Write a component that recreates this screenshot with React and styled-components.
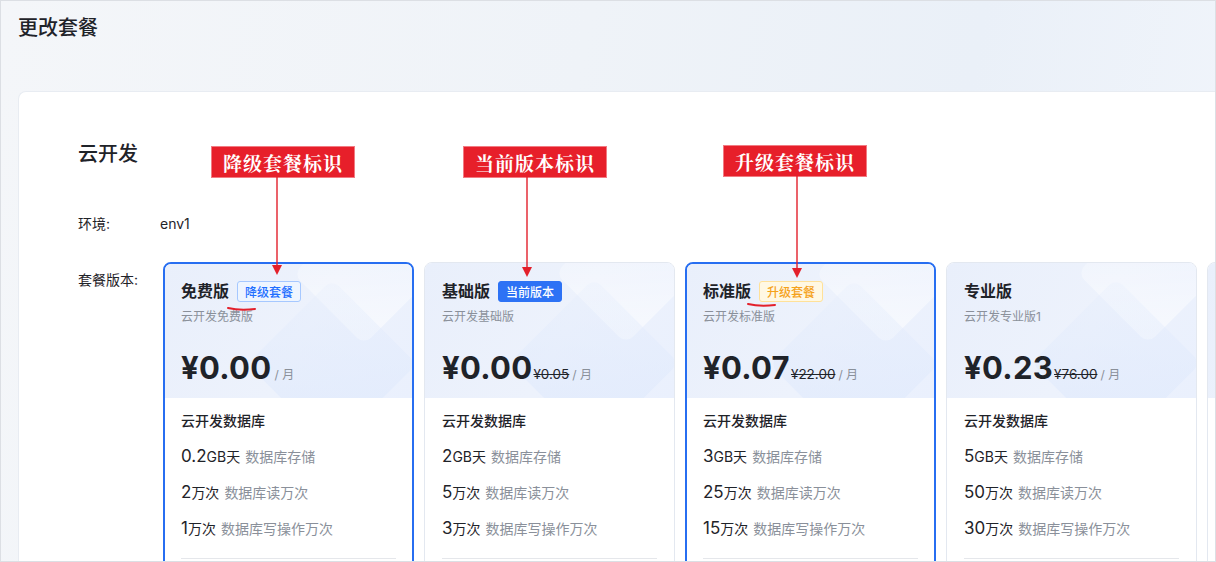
import React from 'react';
import styled, { createGlobalStyle, css } from 'styled-components';

const GlobalStyle = createGlobalStyle`
  html, body {
    margin: 0;
    padding: 0;
    background: #fff;
  }
  * {
    box-sizing: border-box;
  }
`;

const plans = [
  {
    name: '免费版',
    tag: 'down',
    desc: '云开发免费版',
    price: '¥0.00',
    selected: true,
    items: [
      ['0.2', 'GB天', '数据库存储'],
      ['2', '万次', '数据库读万次'],
      ['1', '万次', '数据库写操作万次'],
    ],
  },
  {
    name: '基础版',
    tag: 'current',
    desc: '云开发基础版',
    price: '¥0.00',
    original: '¥0.05',
    items: [
      ['2', 'GB天', '数据库存储'],
      ['5', '万次', '数据库读万次'],
      ['3', '万次', '数据库写操作万次'],
    ],
  },
  {
    name: '标准版',
    tag: 'up',
    desc: '云开发标准版',
    price: '¥0.07',
    original: '¥22.00',
    selected: true,
    items: [
      ['3', 'GB天', '数据库存储'],
      ['25', '万次', '数据库读万次'],
      ['15', '万次', '数据库写操作万次'],
    ],
  },
  {
    name: '专业版',
    desc: '云开发专业版1',
    price: '¥0.23',
    original: '¥76.00',
    items: [
      ['5', 'GB天', '数据库存储'],
      ['50', '万次', '数据库读万次'],
      ['30', '万次', '数据库写操作万次'],
    ],
  },
];

const tagText = { down: '降级套餐', current: '当前版本', up: '升级套餐' };

const notes = [
  { text: '降级套餐标识', left: 210, top: 145 },
  { text: '当前版本标识', left: 462, top: 145 },
  { text: '升级套餐标识', left: 722, top: 144 },
];

const App = () => {
  return (
    <>
      <GlobalStyle />
      <Frame>
        <PageTitle>更改套餐</PageTitle>
        <Panel>
          <SectionTitle>云开发</SectionTitle>
          <FieldRow>
            <FieldLabel>环境:</FieldLabel>
            <FieldValue>env1</FieldValue>
          </FieldRow>
          <FieldRow $top>
            <FieldLabel $offset>套餐版本:</FieldLabel>
            <CardList>
              {plans.map((p) => (
                <PlanCard key={p.name} $selected={p.selected}>
                  <CardHead>
                    <Deco />
                    <HeadRow>
                      <PlanName>{p.name}</PlanName>
                      {p.tag && <Tag $kind={p.tag}>{tagText[p.tag]}</Tag>}
                    </HeadRow>
                    <PlanDesc>{p.desc}</PlanDesc>
                    <PriceRow>
                      <Price>{p.price}</Price>
                      {p.original && <Original>{p.original}</Original>}
                      <Unit>/ 月</Unit>
                    </PriceRow>
                  </CardHead>
                  <CardBody>
                    <GroupTitle>云开发数据库</GroupTitle>
                    {p.items.map(([num, unit, label]) => (
                      <Quota key={label}>
                        <Num>{num}</Num>
                        <QuotaUnit>{unit}</QuotaUnit>
                        <QuotaLabel>{label}</QuotaLabel>
                      </Quota>
                    ))}
                    <Divider />
                  </CardBody>
                </PlanCard>
              ))}
              {/* next plan, only its edge shows inside the window */}
              <PlanCard aria-hidden>
                <CardHead>
                  <Deco />
                </CardHead>
              </PlanCard>
            </CardList>
          </FieldRow>
        </Panel>

        {notes.map((n) => (
          <NoteLabel key={n.text} style={{ left: n.left, top: n.top }}>
            {n.text}
          </NoteLabel>
        ))}
        <NoteLayer width="1216" height="562" viewBox="0 0 1216 562">
          <g stroke="#e3202b" strokeWidth="1.4" fill="none">
            <line x1="277" y1="177" x2="277" y2="266" />
            <line x1="527" y1="177" x2="527" y2="268" />
            <line x1="797" y1="175" x2="797" y2="269" />
          </g>
          <g fill="#e3202b">
            <polygon points="272,265 282,265 277,275" />
            <polygon points="522,267 532,267 527,277" />
            <polygon points="792,268 802,268 797,278" />
          </g>
          <g stroke="#e3202b" strokeWidth="2" fill="none" strokeLinecap="round">
            <path d="M228 308 Q240 311 255 309" />
            <path d="M748 304 Q760 307 775 305" />
          </g>
        </NoteLayer>
      </Frame>
    </>
  );
};

const Frame = styled.div`
  position: relative;
  width: 1216px;
  height: 562px;
  overflow: hidden;
  border: 1px solid #dcdfe4;
  background: linear-gradient(100deg, #f4f6f9 0%, #eff3f8 45%, #eaf0f8 75%, #f1f5fb 100%);
  font-family: Inter, 'Noto Sans CJK SC', sans-serif;
  color: #1f2329;
`;

const PageTitle = styled.div`
  height: 90px;
  padding: 13px 0 0 17px;
  font-size: 20px;
  line-height: 28px;
  font-weight: 500;
  color: #1f2329;
`;

const Panel = styled.div`
  margin-left: 17px;
  height: 480px;
  padding: 48px 0 0 59px;
  background: #fff;
  border: 1px solid #e8ecf2;
  border-right: 0;
  border-radius: 8px 0 0 0;
`;

const SectionTitle = styled.div`
  font-size: 20px;
  line-height: 28px;
  font-weight: 500;
  color: #1f2329;
`;

const FieldRow = styled.div`
  display: flex;
  align-items: ${(p) => (p.$top ? 'flex-start' : 'center')};
  margin-top: ${(p) => (p.$top ? '27px' : '45px')};
`;

const FieldLabel = styled.div`
  flex: 0 0 82px;
  font-size: 14px;
  line-height: 22px;
  color: #1f2329;
  padding-top: ${(p) => (p.$offset ? '7px' : '0')};
`;

const FieldValue = styled.div`
  font-size: 14px;
  line-height: 22px;
  color: #1f2329;
`;

const CardList = styled.div`
  display: flex;
  gap: 10px;
  padding-left: 3px;
`;

/* --edge keeps the content of 1px-border cards on the same lines as 2px-border ones */
const PlanCard = styled.div`
  --edge: ${(p) => (p.$selected ? '0px' : '1px')};
  flex: 0 0 251px;
  height: 320px;
  border-radius: 8px;
  overflow: hidden;
  background: #fff;
  border: ${(p) => (p.$selected ? '2px solid #276ef1' : '1px solid #e3e8f0')};
`;

const CardHead = styled.div`
  position: relative;
  overflow: hidden;
  height: calc(134px + var(--edge));
  padding: calc(15px + var(--edge)) calc(16px + var(--edge)) 0;
  background: linear-gradient(120deg, #e9effb 0%, #edf2fc 55%, #eaf0fd 100%);
`;

const Deco = styled.div`
  position: absolute;
  right: 0;
  top: 0;
  width: 180px;
  height: 134px;

  &::before,
  &::after {
    content: '';
    position: absolute;
    transform: rotate(45deg);
    border-radius: 10px;
  }

  &::before {
    width: 100px;
    height: 100px;
    right: -2px;
    top: -40px;
    background: linear-gradient(135deg, rgba(255, 255, 255, 0), rgba(255, 255, 255, 0.6));
  }

  &::after {
    width: 120px;
    height: 120px;
    right: 20px;
    top: 40px;
    background: linear-gradient(135deg, rgba(226, 235, 252, 0.2), rgba(224, 234, 252, 0.85));
  }
`;

const HeadRow = styled.div`
  position: relative;
  display: flex;
  align-items: center;
  gap: 8px;
  height: 24px;
`;

const PlanName = styled.div`
  font-size: 16px;
  font-weight: 600;
  line-height: 24px;
  color: #1f2329;
`;

const tagKinds = {
  down: css`
    background: #eef5ff;
    border-color: #a6c8ff;
    color: #1f6fff;
  `,
  current: css`
    background: #2d72f5;
    border-color: #2d72f5;
    color: #fff;
  `,
  up: css`
    background: #fff8e3;
    border-color: #ffe199;
    color: #f5a21b;
  `,
};

const Tag = styled.span`
  display: inline-flex;
  align-items: center;
  height: 21px;
  padding: 0 7px;
  border: 1px solid;
  border-radius: 3px;
  font-size: 12px;
  font-weight: 500;
  ${(p) => tagKinds[p.$kind]}
`;

const PlanDesc = styled.div`
  position: relative;
  margin-top: 4px;
  font-size: 12px;
  line-height: 20px;
  color: #8a909a;
`;

const PriceRow = styled.div`
  position: relative;
  display: flex;
  align-items: baseline;
  margin-top: 21px;
  height: 40px;
`;

const Price = styled.span`
  font-size: 31px;
  font-weight: 700;
  line-height: 40px;
  color: #1f2329;
  letter-spacing: 0.3px;
`;

const Original = styled.span`
  margin-left: 1px;
  font-size: 13.5px;
  color: #1f2329;
  text-decoration: line-through;
`;

const Unit = styled.span`
  margin-left: 3px;
  font-size: 12px;
  color: #8a909a;
`;

const CardBody = styled.div`
  display: flex;
  flex-direction: column;
  gap: 12px;
  padding: 12px calc(16px + var(--edge)) 0;
`;

const GroupTitle = styled.div`
  font-size: 14px;
  font-weight: 500;
  line-height: 22px;
  color: #1f2329;
`;

const Quota = styled.div`
  display: flex;
  align-items: baseline;
  line-height: 24px;
  height: 24px;
`;

const Num = styled.span`
  font-size: 17px;
  color: #1f2329;
`;

const QuotaUnit = styled.span`
  font-size: 14px;
  color: #1f2329;
`;

const QuotaLabel = styled.span`
  margin-left: 5px;
  font-size: 14px;
  color: #8a909a;
`;

const Divider = styled.div`
  margin-top: 6px;
  height: 1px;
  background: #e5e7eb;
`;

const NoteLabel = styled.div`
  position: absolute;
  width: 144px;
  height: 32px;
  display: flex;
  align-items: center;
  justify-content: center;
  background: #e71f2a;
  border: 1px solid #f27b82;
  color: #fff;
  font-family: 'Noto Serif CJK SC', 'Noto Sans CJK SC', serif;
  font-size: 19px;
  font-weight: 700;
  letter-spacing: 1px;
`;

const NoteLayer = styled.svg`
  position: absolute;
  left: -1px;
  top: -1px;
  pointer-events: none;
`;

export default App;
